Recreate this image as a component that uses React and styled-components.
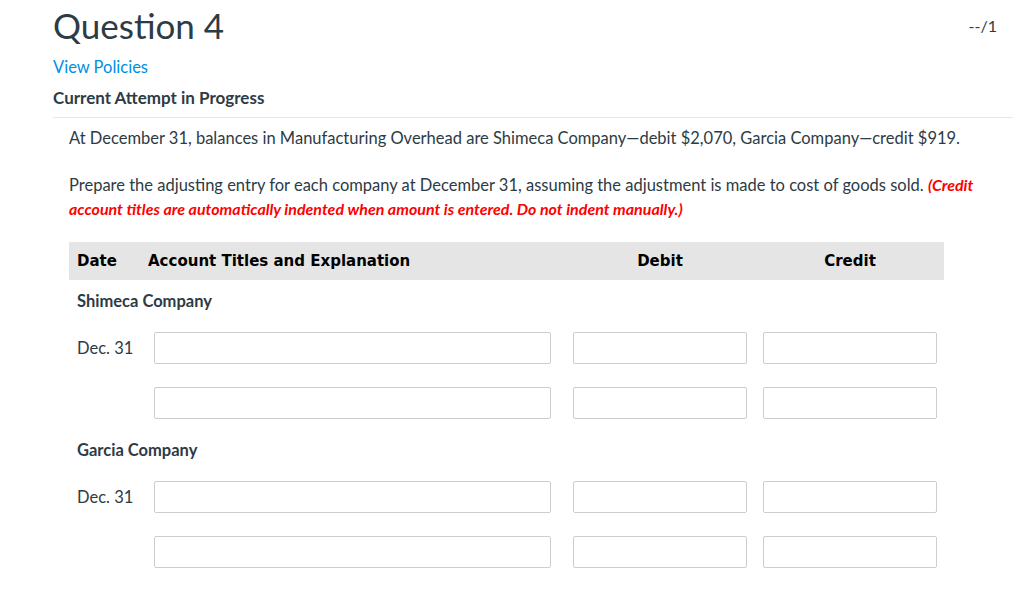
import styled, { createGlobalStyle } from 'styled-components';

const GlobalStyle = createGlobalStyle`
  body {
    margin: 0;
    background: #fff;
    font-family: Lato, "Open Sans", sans-serif;
    color: #2d3b45;
  }
`;

const Page = styled.div`
  width: 960px;
  margin-left: 53px;
  padding-top: 4px;
`;

const TitleRow = styled.div`
  display: flex;
  justify-content: space-between;
  align-items: flex-start;
  padding-right: 16px;
`;

const Title = styled.h1`
  margin: 0;
  font-size: 35px;
  font-weight: 400;
  line-height: 42px;
  color: #2d3b45;
`;

const Points = styled.span`
  font-size: 16px;
  line-height: 20px;
  margin-top: 12px;
  color: #2d3b45;
`;

const PolicyLink = styled.a`
  display: block;
  margin-top: 11px;
  font-size: 16.5px;
  line-height: 20px;
  color: #008ee2;
  text-decoration: none;
`;

const AttemptLabel = styled.div`
  margin-top: 11px;
  font-size: 17px;
  line-height: 20px;
  font-weight: 700;
  padding-bottom: 9px;
  border-bottom: 1px solid #e8e8e8;
`;

const Body = styled.div`
  padding: 9px 16px 0;
`;

const Text = styled.p`
  margin: 0;
  font-size: 16.5px;
  line-height: 23px;

  & + & {
    margin-top: 23px;
  }
`;

const Note = styled.em`
  color: #ff0000;
  font-weight: 700;
  font-size: 16px;
`;

const Table = styled.div`
  width: 875px;
  margin-top: 21px;
`;

const Row = styled.div`
  display: grid;
  grid-template-columns: ${(p) => p.$cols};
  column-gap: 16px;
  align-items: center;
`;

const HeadRow = styled(Row)`
  height: 38px;
  background: #e5e5e5;
  font-family: "DejaVu Sans", Verdana, sans-serif;
  font-weight: 700;
  font-size: 15px;
  color: #000;
`;

const HeadCell = styled.div`
  text-align: ${(p) => (p.$center ? 'center' : 'left')};
  padding-left: ${(p) => (p.$pad ? '8px' : '0')};
`;

const Group = styled.div`
  display: flex;
  flex-direction: column;
  gap: 23px;
  margin-top: ${(p) => (p.$first ? '10px' : '20px')};
`;

const GroupLabel = styled.div`
  padding-left: 8px;
  font-size: 16.5px;
  line-height: 22px;
  font-weight: 700;
  margin-bottom: -3px;
`;

const DateCell = styled.div`
  padding-left: 8px;
  font-size: 16.5px;
`;

const Field = styled.input`
  box-sizing: border-box;
  width: ${(p) => (p.$wide ? '397px' : '100%')};
  height: 32px;
  border: 1px solid #cdcdcd;
  border-radius: 2px;
  background: #fff;
  font-family: Lato, sans-serif;
  font-size: 15px;
  padding: 0 8px;
  outline: none;
`;

const ENTRY_COLS = '69px 403px 174px 174px';
const HEAD_COLS = '63px 409px 174px 174px';

const groups = [
  { name: 'Shimeca Company' },
  { name: 'Garcia Company' },
];

function EntryRow({ date }) {
  return (
    <Row $cols={ENTRY_COLS}>
      <DateCell>{date}</DateCell>
      <Field $wide />
      <Field />
      <Field />
    </Row>
  );
}

export default function App() {
  return (
    <>
      <GlobalStyle />
      <Page>
        <TitleRow>
          <Title>Question 4</Title>
          <Points>--/1</Points>
        </TitleRow>
        <PolicyLink href="#">View Policies</PolicyLink>
        <AttemptLabel>Current Attempt in Progress</AttemptLabel>

        <Body>
          <Text>
            At December 31, balances in Manufacturing Overhead are Shimeca
            Company—debit $2,070, Garcia Company—credit $919.
          </Text>
          <Text>
            Prepare the adjusting entry for each company at December 31,
            assuming the adjustment is made to cost of goods sold.{' '}
            <Note>
              (Credit account titles are automatically indented when amount is
              entered. Do not indent manually.)
            </Note>
          </Text>

          <Table>
            <HeadRow $cols={HEAD_COLS}>
              <HeadCell $pad>Date</HeadCell>
              <HeadCell>Account Titles and Explanation</HeadCell>
              <HeadCell $center>Debit</HeadCell>
              <HeadCell $center>Credit</HeadCell>
            </HeadRow>

            {groups.map((g, i) => (
              <Group key={g.name} $first={i === 0}>
                <GroupLabel>{g.name}</GroupLabel>
                <EntryRow date="Dec. 31" />
                <EntryRow date="" />
              </Group>
            ))}
          </Table>
        </Body>
      </Page>
    </>
  );
}
